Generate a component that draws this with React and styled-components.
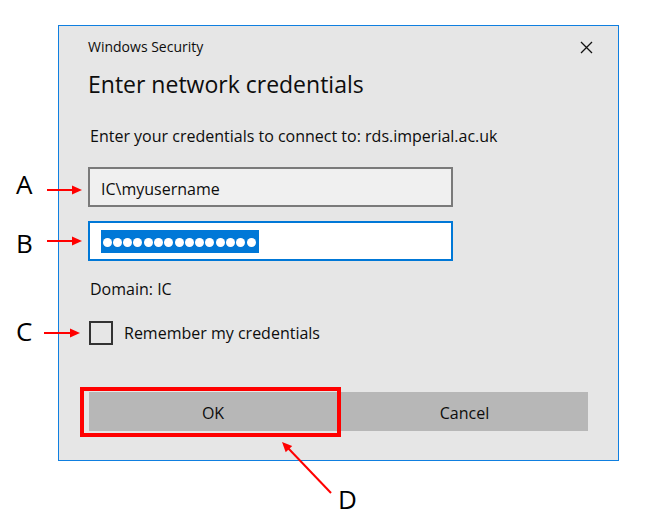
import React from 'react';
import styled, { createGlobalStyle } from 'styled-components';

const GlobalStyle = createGlobalStyle`
  * {
    box-sizing: border-box;
  }
  body {
    margin: 0;
    background: #ffffff;
    font-family: 'Open Sans', 'Noto Sans', sans-serif;
  }
`;

// 페이지
const Page = styled.div`
  position: relative;
  width: 663px;
  height: 524px;
  padding: 25px 0 0 58px;
  background: #ffffff;
`;

const Dialog = styled.div`
  display: flex;
  flex-direction: column;
  width: 561px;
  height: 436px;
  padding: 11px 30px 29px 29px;
  border: 1px solid #0f7fe0;
  background: #e6e6e6;
  color: #0d0d0d;
`;

const TitleBar = styled.div`
  display: flex;
  align-items: center;
  justify-content: space-between;
  height: 20px;
  line-height: 20px;
  font-size: 14px;
`;

const CloseBtn = styled.button`
  display: flex;
  align-items: center;
  justify-content: center;
  width: 20px;
  height: 20px;
  margin-right: -8px;
  padding: 0;
  border: none;
  background: transparent;
  cursor: pointer;
`;

const Heading = styled.h1`
  margin: 11px 0 0 0;
  font-size: 23px;
  font-weight: 400;
  line-height: 32px;
`;

const Text = styled.p`
  margin: ${props => props.top || 0}px 0 0 ${props => props.left || 1}px;
  font-size: 16px;
  line-height: 22px;
`;

const Field = styled.div`
  display: flex;
  align-items: center;
  width: 365px;
  height: 40px;
  margin-top: ${props => props.top}px;
  padding: ${props => (props.focused ? '0' : '3px')} 0 0 11px;
  border: 2px solid ${props => (props.focused ? '#0078d7' : '#7a7a7a')};
  background: ${props => (props.focused ? '#ffffff' : '#f0f0f0')};
  font-size: 16px;
`;

const Selection = styled.span`
  display: flex;
  align-items: center;
  gap: 1.3px;
  height: 23px;
  padding: 3px 3px 0 1.5px;
  background: #0078d7;
`;

const Dot = styled.span`
  width: 9px;
  height: 9px;
  border-radius: 50%;
  background: #ffffff;
`;

const CheckRow = styled.label`
  display: flex;
  align-items: center;
  gap: 11px;
  margin-top: 21px;
  margin-left: 1px;
  font-size: 16px;
  cursor: pointer;
`;

const CheckBox = styled.span`
  width: 24px;
  height: 24px;
  border: 2px solid #333333;
`;

const Buttons = styled.div`
  display: grid;
  grid-template-columns: 248px 247px;
  gap: 4px;
  margin: auto 0 0 1px;
`;

const Button = styled.button`
  height: 39px;
  padding: 2px 0 0 0;
  border: none;
  background: #b7b7b7;
  color: #0d0d0d;
  font-family: inherit;
  font-size: 16px;
  cursor: pointer;
`;

// 주석 (A, B, C, D)
const Label = styled.span`
  position: absolute;
  left: ${props => props.x}px;
  top: ${props => props.y}px;
  font-size: 26px;
  line-height: 1;
  color: #000000;
`;

const Highlight = styled.div`
  position: absolute;
  left: 80px;
  top: 387px;
  width: 261px;
  height: 50px;
  border: 4px solid #ff0000;
`;

const Arrows = styled.svg`
  position: absolute;
  left: 0;
  top: 0;
  pointer-events: none;
`;

function App() {
  const dots = Array.from({ length: 15 });

  return (
    <Page>
      <GlobalStyle />
      <Dialog>
        <TitleBar>
          <span>Windows Security</span>
          <CloseBtn aria-label="Close">
            <svg width="13" height="13" viewBox="0 0 13 13">
              <path d="M1 1L12 12M12 1L1 12" stroke="#111" strokeWidth="1.3" />
            </svg>
          </CloseBtn>
        </TitleBar>
        <Heading>Enter network credentials</Heading>
        <Text top={25} left={2}>
          Enter your credentials to connect to: rds.imperial.ac.uk
        </Text>
        <Field top={20}>IC\myusername</Field>
        <Field top={14} focused>
          <Selection>
            {dots.map((_, i) => (
              <Dot key={i} />
            ))}
          </Selection>
        </Field>
        <Text top={17} left={2}>
          Domain: IC
        </Text>
        <CheckRow>
          <CheckBox />
          Remember my credentials
        </CheckRow>
        <Buttons>
          <Button>OK</Button>
          <Button>Cancel</Button>
        </Buttons>
      </Dialog>

      <Highlight />
      <Label x={16} y={171}>A</Label>
      <Label x={16} y={230}>B</Label>
      <Label x={16} y={318}>C</Label>
      <Label x={338} y={486}>D</Label>
      <Arrows width="663" height="524" viewBox="0 0 663 524">
        <g stroke="#ff0000" strokeWidth="2">
          <line x1="47" y1="190" x2="74" y2="190" />
          <line x1="47" y1="241" x2="74" y2="241" />
          <line x1="44" y1="333" x2="72" y2="333" />
          <line x1="331" y1="493" x2="288" y2="448" />
        </g>
        <g fill="#ff0000">
          <polygon points="82,190 72,185.5 72,194.5" />
          <polygon points="82,241 72,236.5 72,245.5" />
          <polygon points="80,333 70,328.5 70,337.5" />
          <polygon points="282,442 292.2,446.1 285.7,452.3" />
        </g>
      </Arrows>
    </Page>
  );
}

export default App;
